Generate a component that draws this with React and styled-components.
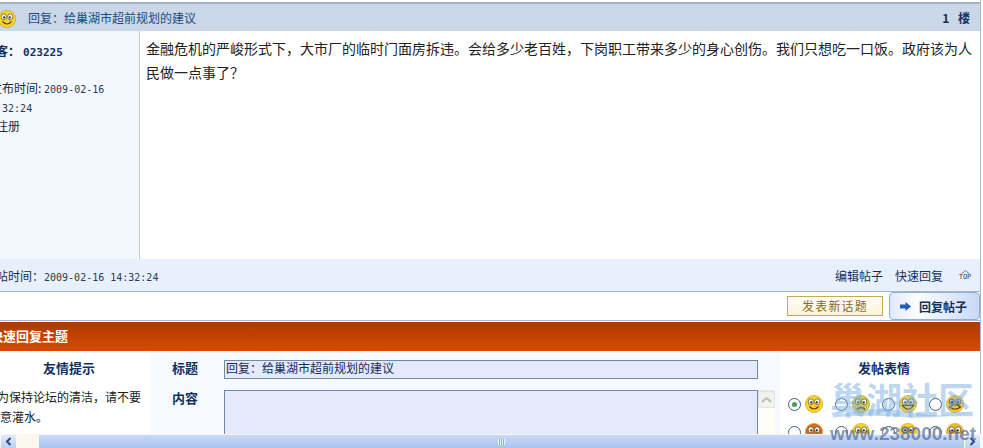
import React from 'react';
import styled, { createGlobalStyle } from 'styled-components';

const CJK = '"Noto Sans CJK SC", "Liberation Sans", sans-serif';
const MONO = '"DejaVu Sans Mono", "Liberation Mono", monospace';
const NAVY = '#12305f';

const GlobalStyle = createGlobalStyle`
  html, body {
    margin: 0;
    padding: 0;
    background: #fff;
    overflow: hidden;
  }
  body {
    font-family: ${CJK};
    font-size: 12px;
    color: #1c2a44;
  }
`;

const Viewport = styled.div`
  position: relative;
  width: 983px;
  height: 448px;
  overflow: hidden;
`;

const Shell = styled.div`
  width: 1004px;
  margin-left: -24px;
  padding-top: 2px;
  border-right: 1px solid #a9b8c8;
`;

const PostHeader = styled.div`
  height: 27px;
  border-top: 2px solid #a3b2c2;
  background: #c9d7e8;
  display: flex;
  align-items: center;
  padding-left: 22px;
  padding-right: 10px;
  color: #1d4a80;
`;

const HeaderIcon = styled.span`
  display: flex;
  margin-top: 3px;
  flex: none;
`;

const HeaderTitle = styled.span`
  margin-left: 12px;
  flex: 1;
  line-height: 25px;
`;

const Floor = styled.span`
  color: ${NAVY};
  font-weight: 700;
  word-spacing: 6px;
`;

const PostBody = styled.div`
  display: flex;
  height: 228px;
`;

const Sidebar = styled.div`
  width: 164px;
  box-sizing: border-box;
  padding: 10px 0 0 8px;
  background: #f3f8fe;
  border-right: 1px solid #c5ced8;
  line-height: 19px;
  flex: none;
`;

const Author = styled.div`
  font-weight: 700;
  color: ${NAVY};
  margin-bottom: 18px;
`;

const AuthorId = styled.span`
  font-family: ${MONO};
  font-size: 11px;
  line-height: 1;
  margin-left: 3px;
`;

const Mono = styled.span`
  font-family: ${MONO};
  font-size: 10px;
  line-height: 1;
  color: #2b3a58;
`;

const Stamp = styled.div`
  width: 130px;
  text-indent: 6px;
`;

const Content = styled.div`
  flex: 1;
  padding: 5px 8px 0 6px;
  font-size: 14px;
  line-height: 24px;
  color: #222;
`;

const PostFooter = styled.div`
  height: 32px;
  background: #e8f1fb;
  border-bottom: 1px solid #a9b8c8;
  display: flex;
  align-items: center;
  padding: 0 8px;
`;

const FooterTime = styled.span`
  flex: 1;
`;

const FooterLink = styled.a`
  color: ${NAVY};
  margin-right: 12px;
`;

const TopMark = styled.span`
  width: 14px;
  margin-left: 3px;
  font: 7px/7px ${MONO};
  color: #33486a;
  display: flex;
  flex-direction: column;
  align-items: center;
`;

const ActionRow = styled.div`
  height: 28px;
  display: flex;
  justify-content: flex-end;
  align-items: flex-start;
  gap: 6px;
  border-bottom: 1px solid #a9b8c8;
`;

const NewTopic = styled.a`
  width: 96px;
  height: 20px;
  box-sizing: border-box;
  margin-top: 4px;
  border: 1px solid #c8a850;
  background: linear-gradient(#fffefa, #fdf3d6);
  color: #8a6a20;
  letter-spacing: 1.2px;
  line-height: 17px;
  text-align: center;
`;

const ReplyTab = styled.a`
  width: 91px;
  height: 28px;
  box-sizing: border-box;
  border: 1px solid #8fb0cf;
  border-radius: 4px;
  background: linear-gradient(90deg, #dfe8fb, #fdfdff 30%, #c8d8f5);
  color: ${NAVY};
  font-weight: 700;
  display: flex;
  align-items: center;
  padding-left: 10px;
  gap: 8px;
`;

const OrangeBar = styled.div`
  height: 29px;
  margin-top: 1px;
  background: linear-gradient(#b03802, #d84a00);
  color: #fff;
  font-size: 13px;
  font-weight: 700;
  line-height: 28px;
  padding-left: 14px;
`;

const FormGrid = styled.div`
  display: flex;
  height: 97px;
`;

const TipColumn = styled.div`
  width: 174px;
  box-sizing: border-box;
  padding: 0 8px 0 12px;
  background: #fff;
  flex: none;
`;

const ColumnTitle = styled.div`
  font-size: 13px;
  font-weight: 700;
  color: ${NAVY};
  text-align: center;
  height: 36px;
  line-height: 34px;
  padding-left: ${({ $inset }) => $inset || 0}px;
`;

const TipText = styled.div`
  text-indent: 9px;
  line-height: 20px;
  color: #222;
`;

const FieldColumn = styled.div`
  width: 630px;
  flex: none;
  background: #f6faff;
  padding-top: 9px;
`;

const FieldRow = styled.div`
  display: flex;
  margin-bottom: 11px;
`;

const FieldLabel = styled.label`
  width: 74px;
  padding-right: 4px;
  box-sizing: border-box;
  text-align: center;
  font-size: 13px;
  font-weight: 700;
  color: ${NAVY};
  line-height: 16px;
  flex: none;
`;

const TitleInput = styled.div`
  width: 534px;
  height: 19px;
  box-sizing: border-box;
  border: 1px solid #6d8ba8;
  background: #e4e9fb;
  padding-left: 1px;
  line-height: 14px;
  color: #1a2a50;
`;

const TextBox = styled.div`
  width: 534px;
  height: 80px;
  box-sizing: border-box;
  border: 1px solid #6d8ba8;
  background: #e4e9fb;
`;

const TextScroll = styled.div`
  width: 17px;
  height: 80px;
  background: #fffdf6;
  border-top: 1px solid #e6e8ea;
`;

const ScrollUp = styled.div`
  height: 17px;
  background: #f1f2ee;
  border: 1px solid #dfe3e2;
  box-sizing: border-box;
  display: flex;
  align-items: center;
  justify-content: center;
`;

const FaceColumn = styled.div`
  flex: 1;
  background: #fff;
  padding-left: 8px;
`;

const FaceGrid = styled.div`
  display: grid;
  grid-template-columns: repeat(4, 47px);
  row-gap: 8px;
  margin-top: 7px;
`;

const FaceChoice = styled.div`
  display: flex;
  align-items: center;
  gap: 4px;
  height: 20px;
`;

const Radio = styled.span`
  width: 13px;
  height: 13px;
  box-sizing: border-box;
  border-radius: 50%;
  border: 1px solid #3f5f7a;
  background: #fff;
  display: flex;
  align-items: center;
  justify-content: center;
  &::after {
    content: '';
    width: 5px;
    height: 5px;
    border-radius: 50%;
    background: ${({ $on }) => ($on ? '#3fa04c' : 'transparent')};
  }
`;

const Watermark = styled.div`
  position: absolute;
  left: 830px;
  top: 378px;
  width: 153px;
  pointer-events: none;
`;

const WatermarkName = styled.div`
  font-size: 36px;
  font-weight: 700;
  line-height: 40px;
  color: rgba(125, 175, 225, 0.5);
  white-space: nowrap;
`;

const WatermarkWave = styled.svg`
  position: absolute;
  left: 0;
  top: 28px;
`;

const WatermarkUrl = styled.div`
  font-family: "Liberation Sans", sans-serif;
  font-size: 19px;
  font-weight: 700;
  line-height: 22px;
  margin-top: 5px;
  color: rgba(85, 105, 145, 0.7);
  white-space: nowrap;
`;

const HScroll = styled.div`
  position: absolute;
  left: 0;
  right: 0;
  bottom: 0;
  height: 14px;
  display: flex;
  border-top: 1px solid #f4f6f8;
  box-sizing: border-box;
  background: #fbf8ee;
`;

const ScrollButton = styled.div`
  width: 15px;
  margin: 0 ${({ $end }) => ($end ? '3px' : '0')} 0 ${({ $end }) => ($end ? '0' : '1px')};
  background: linear-gradient(#e2ebfb, #bcd0f4);
  display: flex;
  align-items: center;
  justify-content: center;
`;

const ScrollThumb = styled.div`
  margin-left: 23px;
  margin-right: 1px;
  flex: 1;
  background: linear-gradient(#c9d9f8, #a9c3f2);
  display: flex;
  align-items: center;
  justify-content: center;
`;

const Grip = styled.span`
  width: 7px;
  height: 6px;
  background: repeating-linear-gradient(90deg, #eef3fd 0 1px, #8fa9d8 1px 2px);
`;

const faces = [
  { name: 'smile', skin: '#f8d428', mouth: 'M4.5 11.5 Q9 16.5 13.5 11.5', eyes: '#fff' },
  { name: 'sad', skin: '#c9cf55', mouth: 'M5 14.5 Q9 10.5 13 14.5', eyes: '#fff' },
  { name: 'grin', skin: '#d9d25a', mouth: 'M3.5 10.5 Q9 18 14.5 10.5 Z', eyes: '#fff' },
  { name: 'cry', skin: '#f2c93a', mouth: 'M3.5 12 Q9 7.5 14.5 12 Q9 16.5 3.5 12 Z', eyes: '#8fc0ea' },
  { name: 'angry', skin: '#e0661a', mouth: 'M5 14.5 Q9 10.5 13 14.5', eyes: '#fff' },
  { name: 'wow', skin: '#f8d428', mouth: 'M7 13 h4', eyes: '#fff' },
  { name: 'wink', skin: '#f8d428', mouth: 'M6 12 Q9 15 12 12', eyes: '#fff' },
  { name: 'sulk', skin: '#eeb92c', mouth: 'M4 13 Q9 9 14 13', eyes: '#fff' },
];

const Face = ({ skin, mouth, eyes }) => (
  <svg width="18" height="18" viewBox="0 0 18 18">
    <circle cx="9" cy="9" r="8.6" fill={skin} stroke="#c9980e" strokeWidth="0.6" />
    <ellipse cx="5.8" cy="6.8" rx="2.6" ry="3" fill={eyes} stroke="#5a4210" strokeWidth="0.7" />
    <ellipse cx="12.2" cy="6.8" rx="2.6" ry="3" fill={eyes} stroke="#5a4210" strokeWidth="0.7" />
    <circle cx="6.2" cy="7.4" r="1.1" fill="#222" />
    <circle cx="11.8" cy="7.4" r="1.1" fill="#222" />
    <path d={mouth} fill="none" stroke="#6a3a08" strokeWidth="1.2" />
  </svg>
);

const Arrow = () => (
  <svg width="11" height="9" viewBox="0 0 11 9">
    <path d="M0 2.5 H5.5 V0 L11 4.5 L5.5 9 V6.5 H0 Z" fill="#1f5fb8" />
  </svg>
);

const Chevron = ({ flip }) => (
  <svg width="7" height="9" viewBox="0 0 7 9">
    <path d={flip ? 'M1.5 1 L5 4.5 L1.5 8' : 'M5.5 1 L2 4.5 L5.5 8'} fill="none" stroke="#2c4a80" strokeWidth="2" />
  </svg>
);

const App = () => (
  <Viewport>
    <GlobalStyle />
    <Shell>
      <PostHeader>
        <HeaderIcon>
          <Face {...faces[0]} />
        </HeaderIcon>
        <HeaderTitle>回复：给巢湖市超前规划的建议</HeaderTitle>
        <Floor>1 楼</Floor>
      </PostHeader>
      <PostBody>
        <Sidebar>
          <Author>
            访客：<AuthorId>023225</AuthorId>
          </Author>
          <Stamp>
            发布时间: <Mono>2009-02-16 14:32:24</Mono>
          </Stamp>
          <div>未注册</div>
        </Sidebar>
        <Content>
          金融危机的严峻形式下，大市厂的临时门面房拆违。会给多少老百姓，下岗职工带来多少的身心创伤。我们只想吃一口饭。政府该为人民做一点事了？
        </Content>
      </PostBody>
      <PostFooter>
        <FooterTime>
          发帖时间：<Mono>2009-02-16 14:32:24</Mono>
        </FooterTime>
        <FooterLink>编辑帖子</FooterLink>
        <FooterLink>快速回复</FooterLink>
        <TopMark>
          <svg width="9" height="4" viewBox="0 0 9 4">
            <path d="M0.5 4 L4.5 0.5 L8.5 4" fill="none" stroke="#6b7f9c" />
          </svg>
          TOP
        </TopMark>
      </PostFooter>
      <ActionRow>
        <NewTopic>发表新话题</NewTopic>
        <ReplyTab>
          <Arrow />
          回复帖子
        </ReplyTab>
      </ActionRow>
      <OrangeBar>快速回复主题</OrangeBar>
      <FormGrid>
        <TipColumn>
          <ColumnTitle $inset={8}>友情提示</ColumnTitle>
          <TipText>为保持论坛的清洁，请不要随意灌水。</TipText>
        </TipColumn>
        <FieldColumn>
          <FieldRow>
            <FieldLabel>标题</FieldLabel>
            <TitleInput>回复：给巢湖市超前规划的建议</TitleInput>
          </FieldRow>
          <FieldRow>
            <FieldLabel>内容</FieldLabel>
            <TextBox />
            <TextScroll>
              <ScrollUp>
                <svg width="11" height="6" viewBox="0 0 11 6">
                  <path d="M1 5 L5.5 1 L10 5" fill="none" stroke="#b7c0b8" strokeWidth="2" />
                </svg>
              </ScrollUp>
            </TextScroll>
          </FieldRow>
        </FieldColumn>
        <FaceColumn>
          <ColumnTitle>发帖表情</ColumnTitle>
          <FaceGrid>
            {faces.map((face, i) => (
              <FaceChoice key={face.name}>
                <Radio $on={i === 0} />
                <Face {...face} />
              </FaceChoice>
            ))}
          </FaceGrid>
        </FaceColumn>
      </FormGrid>
    </Shell>
    <HScroll>
      <ScrollButton>
        <Chevron />
      </ScrollButton>
      <ScrollThumb>
        <Grip />
      </ScrollThumb>
      <ScrollButton $end>
        <Chevron flip />
      </ScrollButton>
    </HScroll>
    <Watermark>
      <WatermarkName>巢湖社区</WatermarkName>
      <WatermarkWave width="153" height="16" viewBox="0 0 153 16">
        <path d="M0 12 Q40 -2 80 6 T150 4 Q110 14 70 11 T0 12 Z" fill="rgba(125, 175, 225, 0.45)" />
      </WatermarkWave>
      <WatermarkUrl>www.238000.net</WatermarkUrl>
    </Watermark>
  </Viewport>
);

export default App;
